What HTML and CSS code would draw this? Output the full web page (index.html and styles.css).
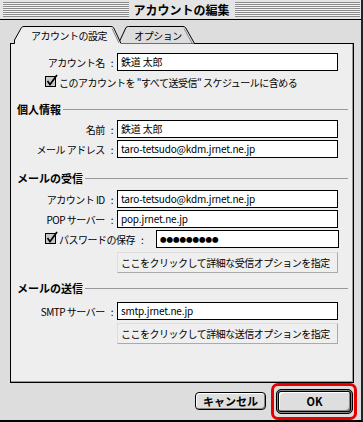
FILE: index.html
```html
<!DOCTYPE html>
<html lang="ja">
  <head>
    <meta charset="UTF-8" />
    <title>アカウントの編集</title>
    <link rel="stylesheet" href="styles.css">
  </head>
  <body>
    <div class="window">
      <div class="titlebar">
        <div class="stripes"></div>
        <span class="title">アカウントの編集</span>
        <div class="stripes"></div>
      </div>

      <div class="tabs">
        <div class="tab active">
          <svg class="tab-shape" width="112" height="18" viewBox="0 0 112 18">
            <path d="M0 18 L0 17.5 L4.5 17.5 L4.5 14 L11.5 1.5 Q12.5 0.5 14 0.5 L101 0.5 Q102.5 0.5 103.5 1.5 L111 17.5 L112 18 Z" fill="#eeeeee"/>
            <path d="M0 17.5 L4.5 17.5 L4.5 14 L11.5 1.5 Q12.5 0.5 14 0.5 L101 0.5 Q102.5 0.5 103.5 1.5 L111 17.5" fill="none" stroke="#000"/>
            <path d="M102 2.5 L109 17" fill="none" stroke="#888"/>
          </svg>
          <span>アカウントの設定</span>
        </div>
        <div class="tab">
          <svg class="tab-shape" width="78" height="18" viewBox="0 0 78 18">
            <path d="M0.5 17.5 L8 1.5 Q9 0.5 10.5 0.5 L65 0.5 Q66.5 0.5 67.5 1.5 L76.5 17.5" fill="#dddddd" stroke="#000"/>
            <path d="M66 2.5 L74 17" fill="none" stroke="#888"/>
          </svg>
          <span>オプション</span>
        </div>
      </div>

      <div class="panel">
        <div class="row">
          <label class="label">アカウント名<span class="colon">:</span></label>
          <div class="field">鉄道 太郎</div>
        </div>
        <div class="check-row first-check">
          <svg class="checkbox" width="14" height="13" viewBox="0 0 14 13">
            <rect x="0.5" y="2.5" width="10" height="10" fill="#c8c8c8" stroke="#000"/>
            <path d="M2.5 7 L5 10.5 L12 1" fill="none" stroke="#000" stroke-width="1.7"/>
          </svg>
          <span>このアカウントを "すべて送受信" スケジュールに含める</span>
        </div>

        <div class="section">個人情報</div>
        <div class="row">
          <label class="label">名前<span class="colon">:</span></label>
          <div class="field">鉄道 太郎</div>
        </div>
        <div class="row">
          <label class="label">メール アドレス<span class="colon">:</span></label>
          <div class="field">taro-tetsudo@kdm.jrnet.ne.jp</div>
        </div>

        <div class="section">メールの受信</div>
        <div class="row row-after-section">
          <label class="label">アカウント ID<span class="colon">:</span></label>
          <div class="field">taro-tetsudo@kdm.jrnet.ne.jp</div>
        </div>
        <div class="row">
          <label class="label">POP サーバー<span class="colon">:</span></label>
          <div class="field">pop.jrnet.ne.jp</div>
        </div>
        <div class="check-row password-row">
          <svg class="checkbox" width="14" height="13" viewBox="0 0 14 13">
            <rect x="0.5" y="2.5" width="10" height="10" fill="#c8c8c8" stroke="#000"/>
            <path d="M2.5 7 L5 10.5 L12 1" fill="none" stroke="#000" stroke-width="1.7"/>
          </svg>
          <span class="pw-label">パスワードの保存<span class="colon">:</span></span>
          <div class="field pw-field">●●●●●●●●●</div>
        </div>
        <button class="option-btn">ここをクリックして詳細な受信オプションを指定</button>

        <div class="section section-send">メールの送信</div>
        <div class="row row-smtp">
          <label class="label">SMTP サーバー<span class="colon">:</span></label>
          <div class="field">smtp.jrnet.ne.jp</div>
        </div>
        <button class="option-btn option-btn-send">ここをクリックして詳細な送信オプションを指定</button>
      </div>

      <div class="footer">
        <button class="btn">キャンセル</button>
        <button class="btn btn-default">OK</button>
      </div>
    </div>
  </body>
</html>
```

FILE: styles.css
```css
body {
  margin: 0;
  font-family: "Noto Sans CJK JP", "DejaVu Sans", sans-serif;
  font-size: 10px;
  letter-spacing: -0.5px;
  color: #000;
  background: #dddddd;
}
.window {
  width: 363px;
  height: 422px;
  box-sizing: border-box;
  background: #dddddd;
  border-right: 2px solid #222;
  border-bottom: 2px solid #000;
  display: flex;
  flex-direction: column;
}

/* title bar */
.titlebar {
  height: 19px;
  display: flex;
  align-items: center;
  gap: 5px;
  padding: 0 1px 0 3px;
  border-bottom: 1px solid #000;
  background: #e4e4e4;
}
.stripes {
  flex: 1;
  height: 15px;
  background: repeating-linear-gradient(to bottom, #8a8a8a 0, #8a8a8a 1px, #f4f4f4 1px, #f4f4f4 2px);
}
.title {
  font-size: 12px;
  font-weight: bold;
  letter-spacing: 0;
  line-height: 14px;
}

/* tabs */
.tabs {
  display: flex;
  height: 18px;
  margin: 6px 0 -1px 10px;
  position: relative;
  z-index: 1;
}
.tab {
  position: relative;
  height: 18px;
  display: flex;
  align-items: center;
  justify-content: center;
  line-height: 12px;
  padding-top: 1px;
  box-sizing: border-box;
}
.tab .tab-shape {
  position: absolute;
  left: 0;
  top: 0;
}
.tab span {
  position: relative;
}
.tab.active {
  width: 112px;
  z-index: 2;
  padding-left: 6px;
}
.tab:not(.active) {
  width: 78px;
  margin-left: -4px;
  padding-left: 2px;
}

/* panel */
.panel {
  height: 340px;
  margin: 0 7px 0 10px;
  box-sizing: border-box;
  background: #eeeeee;
  border: 1px solid #000;
  box-shadow: inset -1px -1px 0 #999;
  padding: 9px 0 0 0;
}
.row {
  display: flex;
  align-items: center;
  gap: 4px;
  margin-bottom: 2px;
}
.label {
  width: 102px;
  text-align: right;
  white-space: nowrap;
}
.colon {
  padding-left: 6px;
}
.field {
  width: 221px;
  height: 18px;
  box-sizing: border-box;
  background: #fff;
  border: 1px solid #000;
  padding: 0 3px;
  line-height: 16px;
  letter-spacing: -0.2px;
  white-space: nowrap;
  overflow: hidden;
}
.check-row {
  display: flex;
  align-items: center;
  padding-left: 34px;
  height: 14px;
}
.checkbox {
  margin: -3px 0 0 0;
}
.first-check {
  margin-top: 4px;
}
.password-row {
  height: 18px;
  margin-top: 1px;
}
.pw-label {
  width: 97px;
  white-space: nowrap;
}
.pw-field {
  width: 183px;
  font-size: 6.5px;
  letter-spacing: 0;
}
.section {
  display: flex;
  align-items: center;
  gap: 2px;
  font-size: 11px;
  font-weight: bold;
  letter-spacing: 0;
  line-height: 14px;
  margin: 13px 5px 4px 6px;
}
.section::after {
  content: "";
  flex: 1;
  border-top: 1px solid #999;
}
.section-send {
  margin-top: 8px;
}
.row-after-section {
  margin-top: 5px;
}
.row-smtp {
  margin-top: 7px;
}
.option-btn {
  display: block;
  width: 221px;
  height: 21px;
  margin: 4px 0 0 106px;
  padding: 0 0 0 3px;
  text-align: left;
  white-space: nowrap;
  font-family: inherit;
  font-size: 10px;
  letter-spacing: -0.5px;
  background: #efefef;
  border: 1px solid #aaa;
  border-top-color: #ddd;
  border-left-color: #ddd;
}
.option-btn-send {
  margin-top: 3px;
}

/* footer */
.footer {
  flex: 1;
  display: flex;
  justify-content: flex-end;
  align-items: center;
  gap: 10px;
  padding: 2px 8px 3px 0;
}
.btn {
  height: 18px;
  width: 71px;
  font-family: inherit;
  font-size: 11px;
  font-weight: bold;
  letter-spacing: 0;
  background: #dedede;
  border: 1px solid #000;
  border-radius: 4px;
  box-shadow: inset 1px 1px 0 #fff, inset -1px -1px 0 #888;
  padding: 0;
  line-height: 14px;
}
.btn-default {
  position: relative;
  width: 77px;
  height: 25px;
  border: 1px solid #000;
  border-radius: 5px;
  box-shadow: inset 0 0 0 1px #888, inset 0 0 0 2px #000, inset 3px 3px 0 #fff, inset -3px -3px 0 #888;
}
/* red highlight around OK */
.btn-default::after {
  content: "";
  position: absolute;
  left: -6px;
  top: -7px;
  right: -5px;
  bottom: -7px;
  border: 3px solid #e60000;
  border-radius: 7px;
}
```
